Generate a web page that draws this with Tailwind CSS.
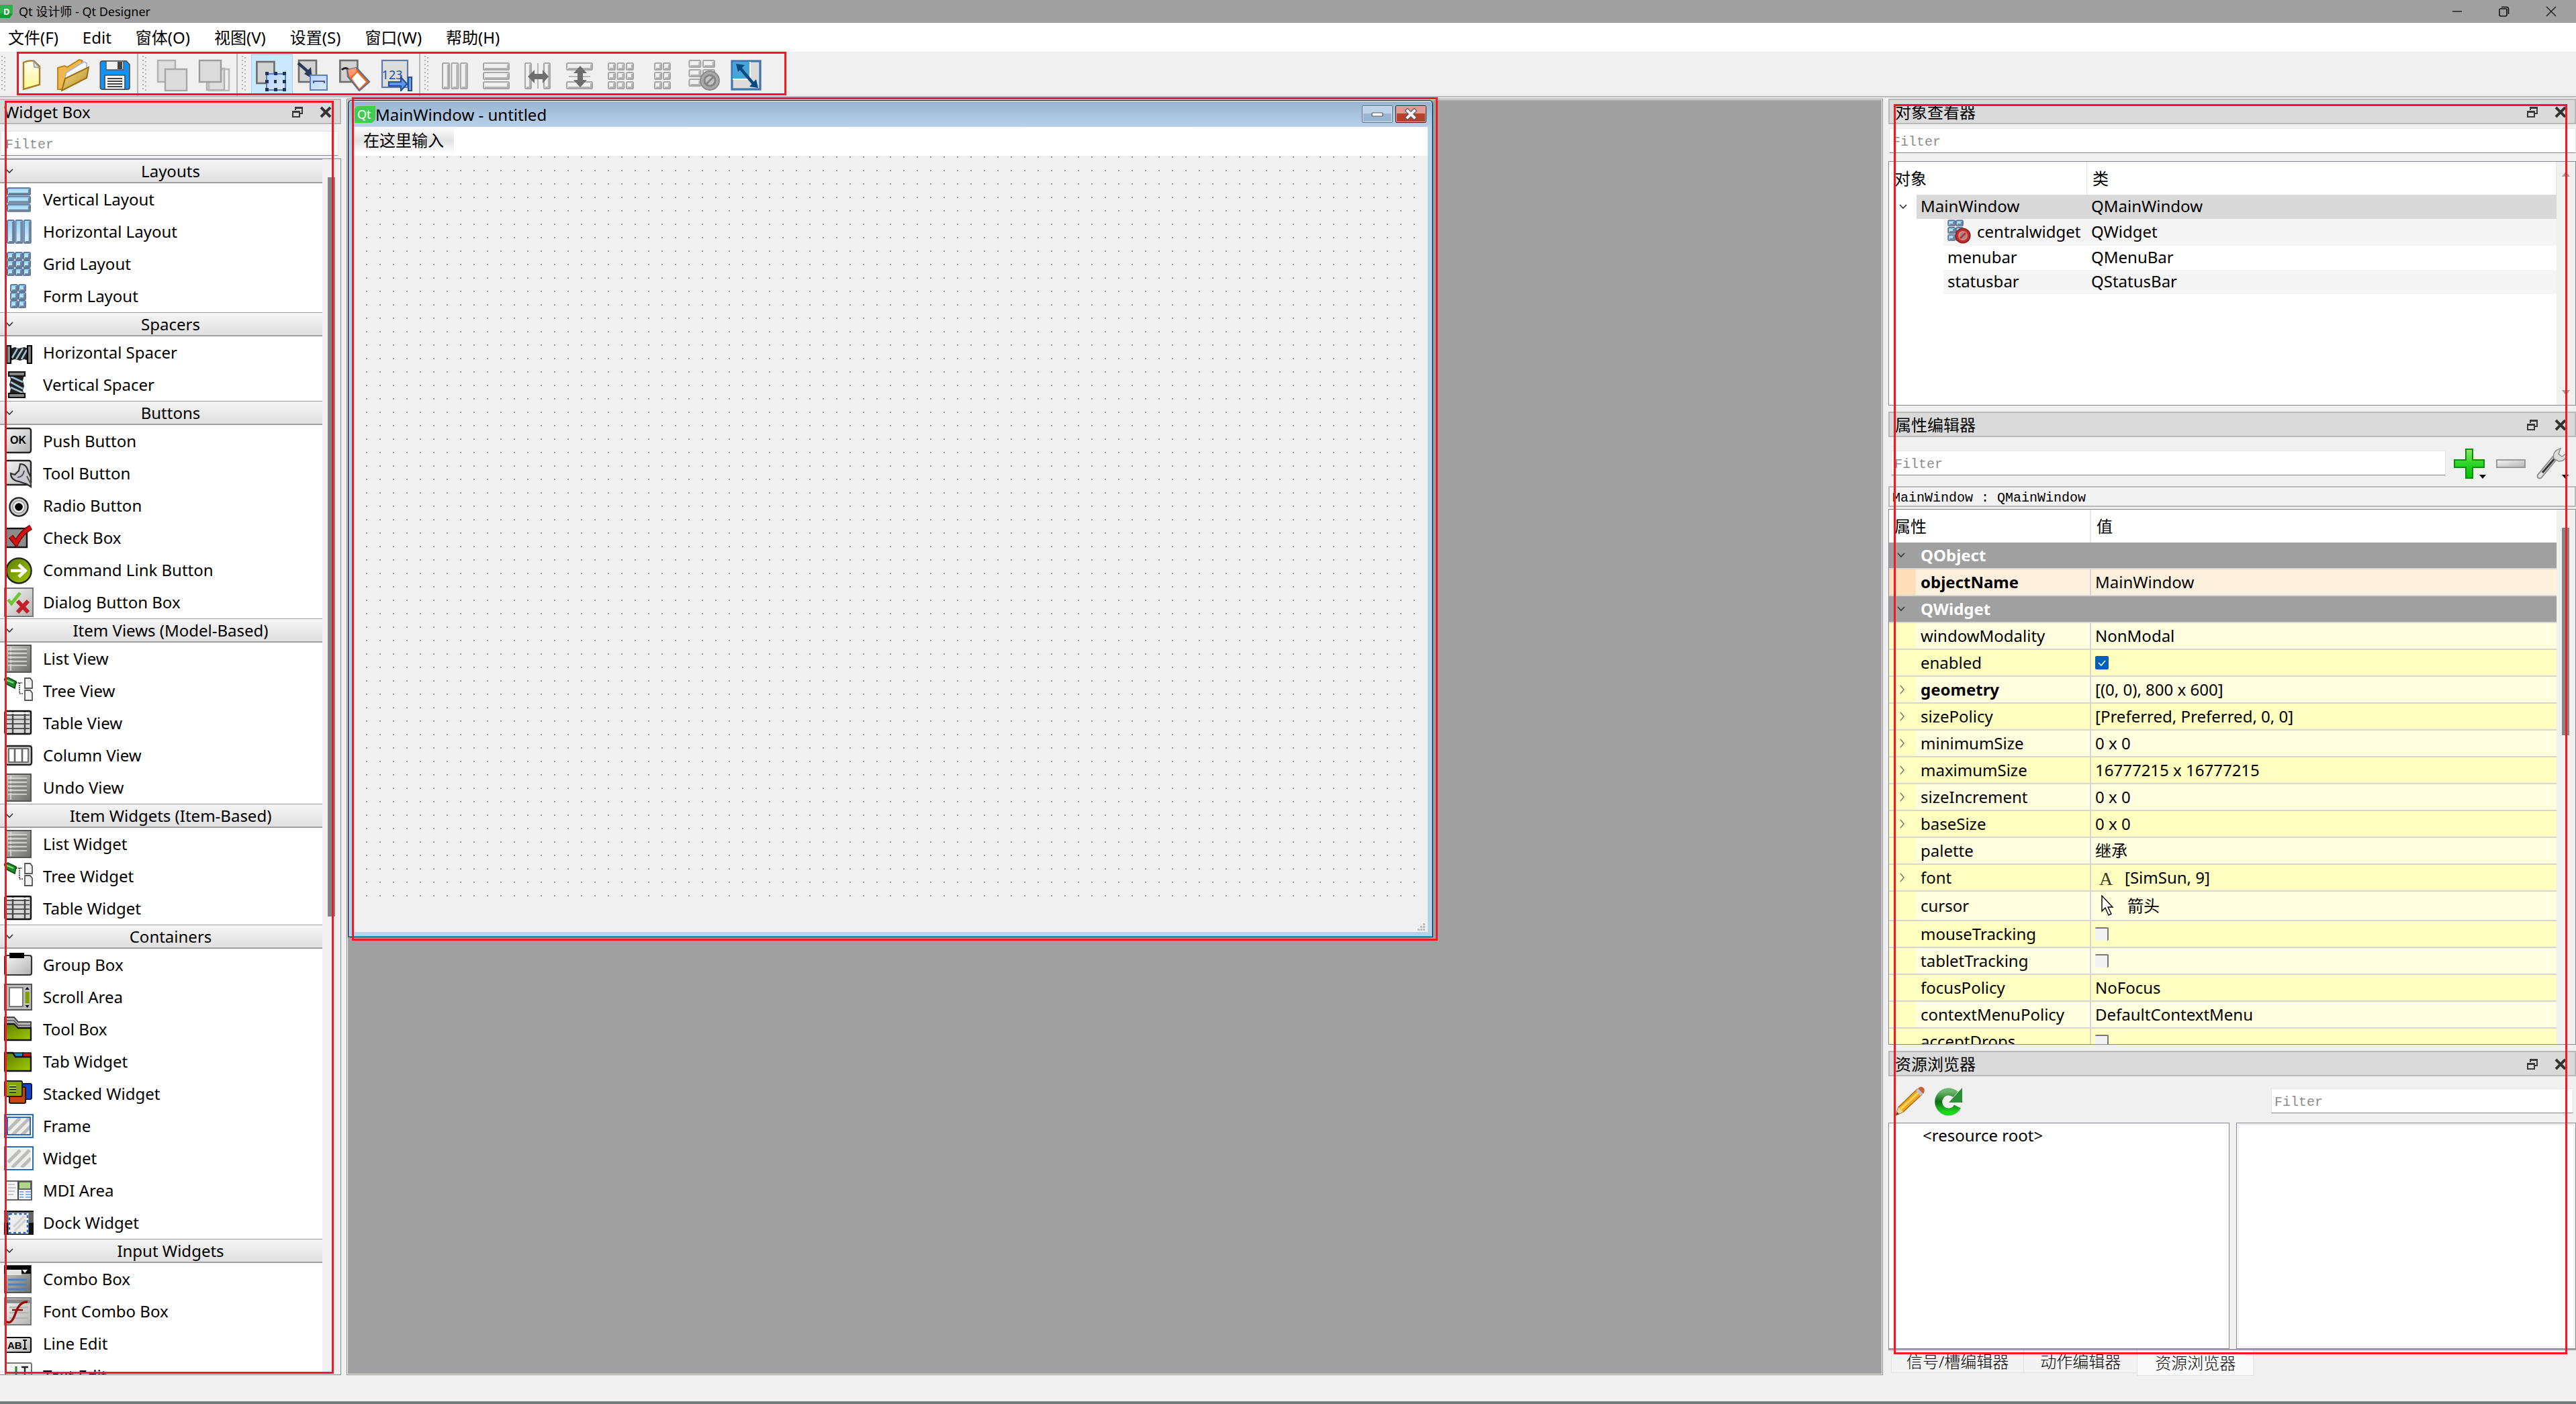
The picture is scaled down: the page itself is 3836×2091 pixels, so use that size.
<!DOCTYPE html>
<html lang="zh-CN">
<head>
    <meta charset="UTF-8">
    <meta name="viewport" content="width=device-width, initial-scale=1.0">
    <title>Qt 设计师 - Qt Designer</title>
    <script src="https://cdn.jsdelivr.net/npm/@tailwindcss/browser@4"></script>
</head>
<body class="h-screen flex flex-col overflow-hidden bg-[#f0f0f0] text-black text-2xl leading-8 font-['Noto_Sans','Noto_Sans_CJK_SC',sans-serif]">
    <!-- Shared gradients and symbols -->
    <svg class="absolute w-0 h-0" aria-hidden="true">
        <defs>
            <linearGradient id="gBlue" x1="0" y1="0" x2="0" y2="1"><stop offset="0" stop-color="#8ed3fa"/><stop offset="1" stop-color="#d9f1ff"/></linearGradient>
            <linearGradient id="gGray" x1="0" y1="0" x2="1" y2="1"><stop offset="0" stop-color="#f6f6f6"/><stop offset="1" stop-color="#b4b4b4"/></linearGradient>
            <linearGradient id="gList" x1="0" y1="0" x2="1" y2="1"><stop offset="0" stop-color="#c8c8c4"/><stop offset="1" stop-color="#6e6e6a"/></linearGradient>
            <linearGradient id="gLime" x1="0" y1="0" x2="1" y2="1"><stop offset="0" stop-color="#5f7a00"/><stop offset="1" stop-color="#a2cc00"/></linearGradient>
            <linearGradient id="gPaper" x1="0" y1="0" x2="0" y2="1"><stop offset="0" stop-color="#fffdf0"/><stop offset="1" stop-color="#fdf78c"/></linearGradient>
            <linearGradient id="gGold" x1="0" y1="0" x2="1" y2="1"><stop offset="0" stop-color="#f4dd8e"/><stop offset="1" stop-color="#b98a1c"/></linearGradient>
            <linearGradient id="gSky" x1="0" y1="0" x2="1" y2="1"><stop offset="0" stop-color="#b5d2ff"/><stop offset="1" stop-color="#dcebff"/></linearGradient>
            <linearGradient id="gGreen" x1="0" y1="0" x2="0" y2="1"><stop offset="0" stop-color="#8ee86c"/><stop offset="0.5" stop-color="#2fd32a"/><stop offset="1" stop-color="#00c400"/></linearGradient>
            <linearGradient id="gReload" x1="0" y1="0" x2="0" y2="1"><stop offset="0" stop-color="#6cb56c"/><stop offset="0.5" stop-color="#0a6b12"/><stop offset="1" stop-color="#1fd61f"/></linearGradient>
            <symbol id="float" viewBox="0 0 18 18"><path d="M6 6V2h10v9h-4" fill="none" stroke="#3a3a3a" stroke-width="2"/><path d="M5 1h12v3H5zM1 7h12v3H1z" fill="#3a3a3a"/><path d="M2 8h10v8H2z" fill="none" stroke="#3a3a3a" stroke-width="2"/></symbol>
            <symbol id="cross" viewBox="0 0 18 18"><path d="M2 2L16 16M16 2L2 16" stroke="#333" stroke-width="4"/></symbol>
            <symbol id="down" viewBox="0 0 12 8"><path d="M1 1l5 5 5-5" fill="none" stroke="#333" stroke-width="1.6"/></symbol>
            <symbol id="right" viewBox="0 0 8 14"><path d="M1 1l5 6-5 6" fill="none" stroke="#777" stroke-width="1.5"/></symbol>
        </defs>
    </svg>

    <!-- Title bar -->
    <header class="h-[34px] shrink-0 bg-[#a0a0a0] flex items-center justify-between">
        <div class="flex items-center gap-2">
            <svg class="w-5 h-6" viewBox="0 0 20 24"><path d="M0 2h19v14l-5 6H0z" fill="#2bb24a"/><path d="M0 16l10-3 9 3-5 6H0z" fill="#159a3a"/><text x="5" y="17" font-size="13" font-weight="700" fill="#fff" font-family="Noto Sans">D</text></svg>
            <span class="text-lg">Qt 设计师 - Qt Designer</span>
        </div>
        <div class="flex items-center pr-0.5">
            <button class="w-[70px] h-8 grid place-items-center" aria-label="最小化"><svg class="w-4 h-4" viewBox="0 0 16 16"><path d="M1 8h14" stroke="#222" stroke-width="1.5"/></svg></button>
            <button class="w-[70px] h-8 grid place-items-center" aria-label="还原"><svg class="w-4 h-4" viewBox="0 0 16 16"><rect x="1" y="4" width="11" height="11" rx="2" fill="none" stroke="#111" stroke-width="1.6"/><path d="M4 1.5h7.5q3 0 3 3V12" fill="none" stroke="#111" stroke-width="1.6"/></svg></button>
            <button class="w-[70px] h-8 grid place-items-center" aria-label="关闭"><svg class="w-4 h-4" viewBox="0 0 16 16"><path d="M1 1l14 14M15 1L1 15" stroke="#222" stroke-width="1.5"/></svg></button>
        </div>
    </header>

    <!-- Menu bar -->
    <nav class="h-[43px] shrink-0 bg-white flex items-center gap-9 pl-3">
        <button>文件(F)</button>
        <button>Edit</button>
        <button>窗体(O)</button>
        <button>视图(V)</button>
        <button>设置(S)</button>
        <button>窗口(W)</button>
        <button>帮助(H)</button>
    </nav>

    <!-- Toolbar -->
    <div id="toolbar" class="relative h-[68px] shrink-0 flex border-b-2 border-[#b8b8b8]"></div>

    <main class="flex-1 min-h-0 flex gap-2 pt-0.5">
        <!-- Widget Box -->
        <aside class="relative w-[508px] shrink-0 flex flex-col">
            <div class="h-[38px] shrink-0 flex items-center gap-6 pt-0.5 pl-1.5 pr-3 bg-[#dadada] border-2 border-l-0 border-[#b8b8b8]">
                <h2 class="flex-1">Widget Box</h2>
                <button aria-label="浮动"><svg class="w-[18px] h-[18px]"><use href="#float"/></svg></button>
                <button aria-label="关闭"><svg class="w-[18px] h-[18px]"><use href="#cross"/></svg></button>
            </div>
            <input type="text" aria-label="Filter" placeholder="Filter" class="mt-2.5 mb-1 mx-1 ml-px h-[37px] shrink-0 px-1.5 pt-1 bg-white border border-[#e6e6e6] border-b-[#828790] text-xl font-['Liberation_Mono',monospace] placeholder:text-[#8c8c8c]">
            <div class="flex-1 min-h-0 flex border border-l-0 border-[#828790] overflow-hidden bg-[#f0f0f0]">
                <div id="widgetList" class="w-[480px] bg-white"></div>
                <div class="flex-1 pt-[27px] pl-2"><div class="w-[11px] h-[1101px] bg-[#868686]"></div></div>
            </div>
            <div class="absolute left-[7px] right-[11px] top-[3px] bottom-0.5 border-3 border-[#ed1c24] pointer-events-none"></div>
        </aside>

        <!-- Form editing area -->
        <section class="flex-1 min-w-0 bg-[#a0a0a0] border border-[#828790] outline-1 -outline-offset-2 outline-white p-px">
            <div class="relative w-[1616px] rounded-t-md border border-black bg-[#b9d1ea]">
                <div class="border border-[#2fcdf0] border-t-white rounded-t-md">
                    <div class="h-[38px] px-1.5 flex items-center bg-linear-to-b from-[#99b4d1] to-[#b9d1ea] rounded-t-md">
                        <svg class="w-[31px] h-[25px] ml-0.5" viewBox="0 0 31 25"><path d="M4 0h27v20l-5 5H0V4z" fill="#41cd52"/><text x="4" y="19" font-size="18" fill="#fff" font-family="Noto Sans">Qt</text></svg>
                        <h1 class="flex-1 pt-0.5">MainWindow - untitled</h1>
                        <div class="flex gap-1 pr-0.5">
                            <button aria-label="最小化" class="w-[46px] h-[26px] rounded-xs border border-[#5d7290] bg-linear-to-b from-[#bfd3e8] from-45% to-[#9ab4d2] to-45% grid place-items-center outline-1 -outline-offset-2 outline-[#dbe8f5]"><svg class="w-[18px] h-[18px]" viewBox="0 0 18 18"><rect x="1" y="7" width="16" height="5" rx="1" fill="#fff" stroke="#53586a" stroke-width="1.2"/></svg></button>
                            <button aria-label="关闭" class="w-[46px] h-[26px] rounded-xs border border-[#430a14] bg-linear-to-b from-[#e09a8e] from-45% to-[#b8402a] to-45% grid place-items-center outline-1 -outline-offset-2 outline-[#e8b9b0]"><svg class="w-[18px] h-[18px]" viewBox="0 0 18 18"><path d="M4 4l10 10M14 4L4 14" stroke="#53586a" stroke-width="6.4" stroke-linecap="square"/><path d="M4 4l10 10M14 4L4 14" stroke="#f4f4f4" stroke-width="4" stroke-linecap="square"/></svg></button>
                        </div>
                    </div>
                    <div class="mx-1.5 mb-1.5 bg-[#f0f0f0]">
                        <div class="h-[43px] bg-white flex items-start"><button class="h-10 px-[15px] bg-linear-to-b from-white via-[#e2e2e2] to-white">在这里输入</button></div>
                        <svg class="block w-full h-[1156px]">
                            <defs><pattern id="dots" x="18" y="1" width="20" height="20" patternUnits="userSpaceOnUse"><rect x="1" y="0" width="2" height="2" fill="#a0a0a0"/></pattern></defs>
                            <rect x="18" y="0" width="1564" height="1104" fill="url(#dots)"/>
                            <path d="M1593 1143h3v3h-3zM1589 1147h3v3h-3zM1593 1147h3v3h-3zM1585 1151h3v3h-3zM1589 1151h3v3h-3zM1593 1151h3v3h-3z" fill="#bfbfbf"/>
                        </svg>
                    </div>
                </div>
                <div class="absolute left-[5px] -right-2 -top-[5px] -bottom-1.5 border-3 border-[#ed1c24] pointer-events-none"></div>
            </div>
        </section>

        <!-- Docks on the right -->
        <aside class="relative w-[1024px] shrink-0 flex flex-col">
            <div class="h-[38px] shrink-0 flex items-center gap-6 pt-0.5 pl-2 pr-3 bg-[#dadada] border-2 border-[#b8b8b8]">
                <h2 class="flex-1">对象查看器</h2>
                <button aria-label="浮动"><svg class="w-[18px] h-[18px]"><use href="#float"/></svg></button>
                <button aria-label="关闭"><svg class="w-[18px] h-[18px]"><use href="#cross"/></svg></button>
            </div>
            <input type="text" aria-label="Filter" placeholder="Filter" class="mt-1.5 mb-3 ml-px h-[37px] shrink-0 px-1 pt-1 bg-white border border-[#e6e6e6] border-b-[#828790] text-xl font-['Liberation_Mono',monospace] placeholder:text-[#8c8c8c]">
            <div class="h-[364px] shrink-0 flex border border-[#828790] bg-white">
                <div class="flex-1">
                    <table class="w-full table-fixed border-separate border-spacing-0 text-left">
                        <thead>
                            <tr class="h-[49px]">
                                <th class="w-[295px] pl-2 font-normal border-r border-[#e5e5e5]">对象</th>
                                <th class="pl-2 font-normal border-r border-[#e5e5e5]">类</th>
                            </tr>
                        </thead>
                        <tbody id="objectTree"></tbody>
                    </table>
                </div>
                <div class="w-7 bg-[#f0f0f0] flex flex-col justify-between items-center py-3.5">
                    <svg class="w-3 h-2" viewBox="0 0 12 8"><path d="M6 0l6 8H0z" fill="#a0a0a0"/></svg>
                    <svg class="w-3 h-2" viewBox="0 0 12 8"><path d="M6 8l6-8H0z" fill="#a0a0a0"/></svg>
                </div>
            </div>

            <div class="mt-[9px] h-[38px] shrink-0 flex items-center gap-6 pt-0.5 pl-2 pr-3 bg-[#dadada] border-2 border-[#b8b8b8]">
                <h2 class="flex-1">属性编辑器</h2>
                <button aria-label="浮动"><svg class="w-[18px] h-[18px]"><use href="#float"/></svg></button>
                <button aria-label="关闭"><svg class="w-[18px] h-[18px]"><use href="#cross"/></svg></button>
            </div>
            <div class="h-[73px] shrink-0 flex items-center gap-3 pt-1 pl-1 pr-2.5">
                <input type="text" aria-label="Filter" placeholder="Filter" class="flex-1 h-[37px] px-1 pt-1 bg-white border border-[#e6e6e6] border-b-[#828790] text-xl font-['Liberation_Mono',monospace] placeholder:text-[#8c8c8c]">
                <button aria-label="添加动态属性"><svg class="w-[50px] h-12" viewBox="0 0 50 48"><path d="M18 3h10v16h17v11H28v16H18V30H1V19h17z" fill="url(#gGreen)" stroke="#0b8f0b" stroke-width="2"/><path d="M38 41h10l-5 6z" fill="#000"/></svg></button>
                <button aria-label="删除动态属性"><svg class="w-12 h-12" viewBox="0 0 48 48"><rect x="2" y="19" width="42" height="11" fill="url(#gGray)" stroke="#9a9a9a" stroke-width="2"/></svg></button>
                <button aria-label="配置属性编辑器"><svg class="w-[50px] h-12" viewBox="0 0 50 48"><path d="M6 43L30 14" stroke="#8f8f8f" stroke-width="9" stroke-linecap="round"/><path d="M6 43L30 14" stroke="#e2e2e2" stroke-width="5" stroke-linecap="round"/><path d="M10 38L28 17" stroke="#333" stroke-width="3"/><path d="M27 17q-3-11 10-15l-3 8 5 4 7-5q0 12-12 12z" fill="#dcdcdc" stroke="#8f8f8f" stroke-width="1.5"/><path d="M39 41h10l-5 6z" fill="#000"/></svg></button>
            </div>
            <div class="h-[31px] shrink-0 flex items-center pt-1 pl-1 border-2 border-[#b8b8b8] bg-[#f2f2f2] text-xl font-['Liberation_Mono',monospace]">MainWindow : QMainWindow</div>
            <div class="mt-[3px] flex-1 min-h-0 flex border border-[#828790] bg-white">
                <div class="flex-1 h-full overflow-hidden">
                    <table class="w-full table-fixed border-separate border-spacing-0 text-left">
                        <colgroup><col class="w-10"><col class="w-[261px]"><col></colgroup>
                        <thead>
                            <tr class="h-[49px]">
                                <th colspan="2" class="pl-2 font-normal border-r-2 border-[#e5e5e5]">属性</th>
                                <th class="pl-2 font-normal">值</th>
                            </tr>
                        </thead>
                        <tbody id="properties"></tbody>
                    </table>
                </div>
                <div class="w-7 bg-[#f0f0f0] pt-[27px] pl-2"><div class="w-[11px] h-[309px] bg-[#868686]"></div></div>
            </div>

            <div class="mt-[9px] h-[38px] shrink-0 flex items-center gap-6 pt-0.5 pl-2 pr-3 bg-[#dadada] border-2 border-[#b8b8b8]">
                <h2 class="flex-1">资源浏览器</h2>
                <button aria-label="浮动"><svg class="w-[18px] h-[18px]"><use href="#float"/></svg></button>
                <button aria-label="关闭"><svg class="w-[18px] h-[18px]"><use href="#cross"/></svg></button>
            </div>
            <div class="h-[69px] shrink-0 flex items-center gap-2.5 pt-1 pl-2 pr-1">
                <button aria-label="编辑资源"><svg class="w-12 h-12" viewBox="0 0 48 48"><path d="M3 45l4-12L35 6l7 8-28 26z" fill="#f0a81c" stroke="#a8701a" stroke-width="1.5"/><path d="M10 36L38 10" stroke="#ffd45e" stroke-width="3"/><path d="M3 45l4-12 7 7z" fill="#edd49a"/><path d="M3 45l2-5 3 3z" fill="#444"/><path d="M33 8l3-3 8 7-4 4z" fill="#b8c4d4"/><path d="M36 5q5-5 9 0 2 4-1 8z" fill="#c8602c"/></svg></button>
                <button aria-label="重新加载"><svg class="w-12 h-12" viewBox="0 0 48 48"><path d="M34 14A15 15 0 1 0 37 32" fill="none" stroke="url(#gReload)" stroke-width="11"/><path d="M44 4v22H24z" fill="#2c8f35"/></svg></button>
                <div class="flex-1"></div>
                <input type="text" aria-label="Filter" placeholder="Filter" class="w-[450px] h-[37px] px-1 pt-1 bg-white border border-[#e6e6e6] border-b-[#828790] text-xl font-['Liberation_Mono',monospace] placeholder:text-[#8c8c8c]">
            </div>
            <div class="h-[337px] shrink-0 flex gap-2.5">
                <div class="w-[508px] bg-white border border-[#828790] pl-[50px] pt-0.5">&lt;resource root&gt;</div>
                <div class="flex-1 bg-white border border-[#828790] outline-2 -outline-offset-4 outline-[#f0f0f0]"></div>
            </div>
            <div class="h-[39px] shrink-0 flex items-start pl-1 border-t-2 border-[#a0a0a0] font-light">
                <button class="h-[34px] px-[22px] bg-[#f3f3f3] border border-t-0 border-[#e2e2e2]">信号/槽编辑器</button>
                <button class="h-[34px] px-6 bg-[#f3f3f3] border-b border-[#e2e2e2]">动作编辑器</button>
                <button class="h-[38px] px-[26px] bg-[#fafafa] border border-t-0 border-[#e2e2e2]">资源浏览器</button>
            </div>
            <div class="absolute left-2 right-[13px] top-2 bottom-[31px] border-3 border-[#ed1c24] pointer-events-none"></div>
        </aside>
    </main>

    <!-- Status bar -->
    <footer class="h-[43px] shrink-0 border-b-4 border-[#737b7b]"></footer>

    <script>
        // Beveled cell used by all layout icons
        const cell = (x, y, w, h, gray) => `<rect x="${x}" y="${y}" width="${w}" height="${h}" rx="0.8" fill="${gray ? '#f0f0f0' : 'url(#gBlue)'}" stroke="${gray ? '#a6a6a6' : '#62799c'}" stroke-width="1"/><path d="M${x + 1} ${y + h - 1}h${w - 2}v${2 - h}" fill="none" stroke="${gray ? '#b4b4b4' : '#71879b'}" stroke-width="1.1"/>`;
        const cells = (xs, ys, w, h, gray) => ys.map(y => xs.map(x => cell(x, y, w, h, gray)).join('')).join('');
        const block = (x, y, s = 13) => `<rect x="${x}" y="${y}" width="${s}" height="${s + 3}" fill="#d2d2d2" stroke="#6c6c6c" stroke-width="1.3"/>`;
        const pale = (x, y) => `<rect x="${x}" y="${y}" width="13" height="16" fill="#dedede" stroke="#b0b0b0" stroke-width="1.2"/>`;
        const hatch = '<path d="M3 14L12 5M6 18L19 5M13 18l7-7" stroke="#bcbcbc" stroke-width="2.6"/>';
        const list = '<rect x="1" y="1" width="19" height="20" fill="url(#gList)" stroke="#555" stroke-width="1"/><path d="M5 2v18" stroke="#ddd" stroke-width="0.8"/><path d="M3 4h14M3 7h14M3 10h14M3 13h14M3 16h14" stroke="#ddd" stroke-width="0.8"/><path d="M3 5.5h14M3 8.5h14M3 11.5h14M3 14.5h14" stroke="#777" stroke-width="0.7"/>';
        const tree = '<path d="M0 2l3-1 6 3-1 5-6-3z" fill="#1f8a2c" stroke="#0a4a12" stroke-width="0.8"/><path d="M2 3l5 2" stroke="#7fe07f" stroke-width="1"/><path d="M9 5h5M11.5 5v8M11.5 13h3" fill="none" stroke="#000" stroke-width="0.8" stroke-dasharray="0.8 0.8"/><path d="M15.500 1.500h4l1.500 2v5.500h-5.500zM15.500 10.500h4l1.500 2v5.500h-5.500z" fill="#f2f2f2" stroke="#555" stroke-width="0.9"/>';
        const table = '<rect x="0.700" y="2" width="19.300" height="17" rx="1" fill="#d6d6d6" stroke="#111" stroke-width="1.2"/><path d="M1 5h18M1 8.200h18M1 11.500h18M1 15h18" stroke="#555" stroke-width="0.9"/><path d="M6.500 2.500v16M15.500 2.500v16" stroke="#444" stroke-width="1.2"/><path d="M2 3.500h16" stroke="#fff" stroke-width="1"/>';

        const icons = {
            vbox: cells([2.5], [2.5, 8.7, 14.9], 17, 5),
            hbox: cells([2.5, 8.7, 14.9], [2.5], 5, 17),
            grid: cells([2.5, 8.5, 14.5], [2.5, 8.5, 14.5], 5, 5),
            form: cells([5, 11], [2.5, 8.5, 14.5], 5, 5),
            hspacer: '<path d="M5 8l3-1 3 1 4-1 3 1v9l-3-1-3 1-4-1-3 1z" fill="#222"/><path d="M6 15l4-7M9 16l5-8M13 16l4-7" stroke="#9fc4d8" stroke-width="1.3"/><path d="M2 6h3v13H2zM17.500 6h3v13h-3z" fill="#888" stroke="#000" stroke-width="1.1"/>',
            vspacer: '<path d="M4 4h11l-1 4 1 4-1 3 1 3H4l1-4-1-3 1-4z" fill="#222"/><path d="M5 5l9 4M5 9l9 5M5 13l9 4" stroke="#9fc4d8" stroke-width="1.3"/><path d="M3.500 1.500h12v3h-12zM3.500 17.500h12v3h-12z" fill="#888" stroke="#111" stroke-width="1.1"/>',
            push: '<rect x="1" y="1.500" width="19" height="18" rx="1.500" fill="url(#gGray)" stroke="#222" stroke-width="1.2"/><text x="4.500" y="13" font-size="8" font-weight="700" font-family="Liberation Sans">OK</text>',
            tool: '<rect x="1" y="1.500" width="19" height="18" rx="1.500" fill="url(#gGray)" stroke="#222" stroke-width="1.2"/><path d="M12 4l-1 5-3 3-3-1q0 5 6 6l6 2 3 2v-7l-2-4q-1-6-6-6z" fill="#c9c9d0" stroke="#2f2f2f" stroke-width="1.1"/><path d="M15 9q-1 5-5 5M17 13l3 6" fill="none" stroke="#555" stroke-width="1"/>',
            radio: '<circle cx="11" cy="12" r="6.800" fill="#cfcfcf" stroke="#222" stroke-width="1.2"/><circle cx="11" cy="12" r="4.600" fill="#eee" stroke="#999" stroke-width="0.8"/><circle cx="11" cy="12" r="2.900" fill="#000"/>',
            check: '<rect x="1.500" y="4" width="15.500" height="14" fill="#8c8c8c" stroke="#111" stroke-width="1.2"/><path d="M5 10l4 5Q13 7 20 3" fill="none" stroke="#6b0606" stroke-width="4"/><path d="M5 10l4 5Q13 7 20 3" fill="none" stroke="#d80d0d" stroke-width="2.600"/>',
            command: '<circle cx="11" cy="11.500" r="9.300" fill="url(#gLime)" stroke="#222" stroke-width="1.2"/><path d="M5 11.500h10M11 7l4.800 4.500L11 16" fill="none" stroke="#fff" stroke-width="2.300"/>',
            dialog: '<rect x="0.500" y="0.500" width="21" height="21" fill="url(#gGray)" stroke="#777" stroke-width="1"/><path d="M3 9l2.500 3L12 4" fill="none" stroke="#6fc52f" stroke-width="2.400"/><path d="M10 10l8 8.500M18 10l-8 8.500" stroke="#c2202a" stroke-width="3"/>',
            list, tree, table,
            column: '<rect x="1" y="4" width="19.500" height="14" rx="1.500" fill="#c9c9c9" stroke="#222" stroke-width="1.2"/><rect x="3.500" y="6" width="14.500" height="10" fill="#fff" stroke="#555" stroke-width="0.8"/><path d="M8 6v10M13.500 6v10" stroke="#666" stroke-width="1.300"/>',
            group: '<rect x="0.500" y="4" width="20" height="14.500" rx="1.500" fill="url(#gGray)" stroke="#333" stroke-width="1.100"/><path d="M4 2h11v4H4z" fill="#000"/>',
            scroll: '<rect x="0.500" y="1.500" width="20" height="19" fill="#bdbdbd" stroke="#555" stroke-width="1"/><rect x="4" y="4" width="10" height="14" fill="#fff" stroke="#777" stroke-width="1"/><rect x="15.800" y="7" width="3" height="8.500" fill="#7f9e00"/><path d="M17.300 3.500l1.600 2h-3.200zM17.300 19l1.600-2h-3.200z"/>',
            toolbox: '<path d="M0.500 2h7l3 3.500h9.500v5H0.500z" fill="#b5b5b5" stroke="#444" stroke-width="1"/><path d="M1 4.500h6.500l3 3.500H20" fill="none" stroke="#555" stroke-width="0.800"/><path d="M0.500 7h7l3 3h9.500v9H0.500z" fill="url(#gLime)" stroke="#111" stroke-width="1.200"/>',
            tab: '<path d="M7 4.500h7v4H7z" fill="#2084d8" stroke="#111" stroke-width="0.800"/><path d="M14 4.500h6v4h-6z" fill="#e01010" stroke="#111" stroke-width="0.800"/><path d="M0.500 4.500h6l2 3h11.500v10.500H0.500z" fill="url(#gLime)" stroke="#111" stroke-width="1.200"/>',
            stacked: '<rect x="11" y="3.500" width="9.500" height="11.500" rx="1" fill="#1244c8" stroke="#051a5a"/><rect x="4" y="6" width="12" height="12" rx="1" fill="#c2480e" stroke="#3a1200"/><rect x="0.500" y="1.500" width="13" height="11.500" rx="1" fill="#86a800" stroke="#222"/><path d="M4 5.500h5M4 7.500h5M4 9.500h5" stroke="#123" stroke-width="1.500"/><path d="M4 5h5M4 7h5M4 9h5" stroke="#d8ff3a" stroke-width="0.700"/>',
            frame: '<rect x="0.500" y="2.500" width="21" height="17" fill="#fff" stroke="#2a6cc0"/><rect x="2.500" y="4.500" width="17" height="13" fill="#efefec"/>' + hatch + '<path d="M0 1h22v20H0zM2.500 4.500v13h17v-13z" fill="#fff" fill-rule="evenodd"/><rect x="0.500" y="2.500" width="21" height="17" fill="none" stroke="#2a6cc0"/><rect x="2.500" y="4.500" width="17" height="13" fill="none" stroke="#2a6cc0"/>',
            widget: '<rect x="0.500" y="2.500" width="21" height="17" fill="#efefec"/>' + hatch + '<path d="M0 1h22v20H0zM2 4v14h18V4z" fill="#fff" fill-rule="evenodd"/><rect x="0.500" y="2.500" width="21" height="17" fill="none" stroke="#2a6cc0"/>',
            mdi: '<rect x="1" y="4" width="19.500" height="14" fill="#f4f4f4" stroke="#555" stroke-width="0.900"/><path d="M3 6.500h5M3 9h6M3 11.500h5M3 14h4" stroke="#bbb" stroke-width="0.800"/><rect x="11" y="4.500" width="9" height="5.500" fill="#add68a" stroke="#555" stroke-width="0.900"/><path d="M11.500 12h3M11.500 14h3M11.500 16h3M16 12h4M16 14h4M16 16h4" stroke="#86aef0" stroke-width="1.100"/><path d="M10.500 4v14" stroke="#444" stroke-width="1"/>',
            dock: '<rect x="0" y="2" width="22" height="18" fill="#666"/><path d="M0 11h22v9H0z" fill="#111"/><path d="M0 2.500h22" stroke="#111"/><rect x="4" y="4.500" width="13.500" height="14" fill="#ededed" stroke="#fff" stroke-width="1.400"/><path d="M7 14l8-8M8 17l8-8" stroke="#d2d2d2" stroke-width="1.600"/><rect x="4" y="4.500" width="13.500" height="14" fill="none" stroke="#2a6cc0" stroke-width="1.300" stroke-dasharray="2 1.600"/>',
            combo: '<rect x="0.500" y="1" width="19.500" height="20" fill="url(#gList)" stroke="#555"/><path d="M0 1h20v6H0z" fill="#050505"/><path d="M1 4h12v4H1z" fill="#e4e4e4"/><path d="M13.500 4h4l-2 2.500z" fill="#fff"/><path d="M3 11.500h14M3 15h14M3 18.500h14" stroke="#4a80c4" stroke-width="1.600"/>',
            fontcombo: '<rect x="0.500" y="1" width="19.500" height="20" fill="url(#gGray)" stroke="#777"/><path d="M1 3.500h19" stroke="#8a8a8a" stroke-width="3"/><path d="M4 8h14M4 12h14M4 16h14" stroke="#b5b5ae" stroke-width="1.200"/><path d="M1.500 18.500q4 3 7-6t9-8.500" fill="none" stroke="#9a0a0a" stroke-width="1.700"/><path d="M6 10h8" stroke="#9a0a0a" stroke-width="1.300"/>',
            lineedit: '<rect x="1" y="6.500" width="19" height="11" rx="1" fill="url(#gGray)" stroke="#111" stroke-width="1.100"/><text x="2.500" y="15" font-size="7.500" font-weight="700" font-family="Liberation Sans">AB</text><path d="M14 8.500h3M14 15h3M15.500 8.500V15" stroke="#000" stroke-width="0.900"/>',
            textedit: '<rect x="1" y="1.500" width="19.500" height="18" rx="1" fill="#f4f4f4" stroke="#777"/><path d="M9 4v8" stroke="#1a8a2a" stroke-width="1.500"/><path d="M13 4.500h5M15.500 4.500V12" stroke="#222" stroke-width="1.200"/>'
        };

        const categories = [
            ['Layouts', [['vbox', 'Vertical Layout'], ['hbox', 'Horizontal Layout'], ['grid', 'Grid Layout'], ['form', 'Form Layout']]],
            ['Spacers', [['hspacer', 'Horizontal Spacer'], ['vspacer', 'Vertical Spacer']]],
            ['Buttons', [['push', 'Push Button'], ['tool', 'Tool Button'], ['radio', 'Radio Button'], ['check', 'Check Box'], ['command', 'Command Link Button'], ['dialog', 'Dialog Button Box']]],
            ['Item Views (Model-Based)', [['list', 'List View'], ['tree', 'Tree View'], ['table', 'Table View'], ['column', 'Column View'], ['list', 'Undo View']]],
            ['Item Widgets (Item-Based)', [['list', 'List Widget'], ['tree', 'Tree Widget'], ['table', 'Table Widget']]],
            ['Containers', [['group', 'Group Box'], ['scroll', 'Scroll Area'], ['toolbox', 'Tool Box'], ['tab', 'Tab Widget'], ['stacked', 'Stacked Widget'], ['frame', 'Frame'], ['widget', 'Widget'], ['mdi', 'MDI Area'], ['dock', 'Dock Widget']]],
            ['Input Widgets', [['combo', 'Combo Box'], ['fontcombo', 'Font Combo Box'], ['lineedit', 'Line Edit'], ['textedit', 'Text Edit']]]
        ];

        document.getElementById('widgetList').innerHTML = categories.map(([title, items]) => `
            <button class="w-full h-9 flex items-center gap-2 pl-2 border-b-2 border-t border-t-[#a0a0a0] border-b-[#a0a0a0] bg-linear-to-b from-[#f5f5f5] to-[#e0e0e0]">
                <svg class="w-3 h-2"><use href="#down"/></svg>
                <span class="flex-1 text-center">${title}</span>
            </button>
            <ul>${items.map(([icon, name]) => `
                <li class="h-12 flex items-center gap-3.5 pl-1.5">
                    <svg class="w-11 h-11" viewBox="0 0 22 22">${icons[icon]}</svg>
                    <span>${name}</span>
                </li>`).join('')}
            </ul>
        `).join('');

        // Toolbar groups: [label, drawing, state]
        const tools = [
            [
                ['新建', '<path d="M6 2.500Q10 0.500 14 1.500L18 5.500V19L6 22.500z" fill="url(#gPaper)" stroke="#a87c28" stroke-width="1.200"/><path d="M13.500 1.500l0.500 4.500 4 0.500z" fill="#e4e4e4" stroke="#999" stroke-width="0.800"/>'],
                ['打开', '<path d="M0.500 6.500l5-1.500 2 1 9-5.500 2 0.500v6L5 22.500l-4.500 0z" fill="#f0b848" stroke="#c08420" stroke-width="1"/><path d="M4 21L7 10 20 2l2 1v5z" fill="#eef2fa" stroke="#a9b4c8" stroke-width="0.800"/><path d="M5 20L8 11 21 4" fill="none" stroke="#fff" stroke-width="1.200"/><path d="M3.500 23.500L6 14.500 23.500 6 22 14z" fill="url(#gGold)" stroke="#9a7010" stroke-width="1"/>'],
                ['保存', '<path d="M3 1.500h17.500L23 4v17q0 1.500-1.500 1.500h-19Q1.200 22.500 1.200 21V3Q1.200 1.500 3 1.500z" fill="#0d94ff" stroke="#555" stroke-width="0.900"/><path d="M5.500 1.500h13v6.500h-13z" fill="#f2f2f2" stroke="#555" stroke-width="0.700"/><path d="M14 2h3.500v5.500H14z" fill="#444"/><path d="M4.500 12h15v10.500h-15z" fill="#f6f6f6" stroke="#444" stroke-width="0.800"/><path d="M6.500 14.500h11M6.500 16.500h11M6.500 18.500h11M6.500 20.500h11" stroke="#444" stroke-width="0.900"/>']
            ],
            [
                ['放到后面', pale(1, 1) + '<rect x="6.500" y="7.500" width="16" height="16" fill="#dcdcdc" stroke="#a6a6a6" stroke-width="1.200"/>'],
                ['放到前面', pale(6.500, 7) + '<path d="M16 7.500h7v16H8v-6" fill="none" stroke="#b8b8b8" stroke-width="1.200"/><rect x="1" y="1" width="16" height="16" fill="#dcdcdc" stroke="#9c9c9c" stroke-width="1.200"/>']
            ],
            [
                ['编辑窗口部件', block(0.700, 2) + '<rect x="8" y="11" width="14" height="12" fill="url(#gSky)" stroke="#5a7fc0"/><path d="M7 9.500h2.500V12H7zM13.500 9.500H16V12h-2.500zM20 9.500h2.500V12H20zM7 15.500h2.500V18H7zM20 15.500h2.500V18H20zM7 21.500h2.500V24H7zM13.500 21.500H16V24h-2.500zM20 21.500h2.500V24H20zM13.500 15.500h2V18h-2z" fill="#22335c"/>', true],
                ['编辑信号/槽', block(1, 1) + '<path d="M0.500 3l8 7" stroke="#2b3c58" stroke-width="2.200"/><path d="M11 14.500l-6-3.500 5-5z" fill="#2b3c58"/><rect x="9.500" y="12" width="12.500" height="11" fill="url(#gSky)" stroke="#5a7fc0"/><path d="M12 18v-1.500h8V18" fill="none" stroke="#4b5f86" stroke-width="1.100"/>'],
                ['编辑伙伴', block(0.700, 1) + '<path d="M2 8q3-3 6 1" fill="none" stroke="#222" stroke-width="1.500"/><path d="M6 8l7-1.500L22.500 17 15 23.500 6.500 13z" fill="#f06a1c" stroke="#5d6f88" stroke-width="1.100"/><path d="M13.500 10l6.500 7-5 5-5.500-7.500z" fill="#fff"/><path d="M6.500 8l6-1.500 0.500 3-5 4z" fill="#ff9a70"/>'],
                ['编辑 Tab 顺序', '<rect x="1" y="1" width="19" height="20" fill="#dcdcdc" stroke="#5f7ba8" stroke-width="1.100"/><text x="0.800" y="15" font-size="9" fill="#1d4f9e" font-family="Noto Sans">123</text><path d="M6 17h9v-3.500l4.500 5-4.500 5V20H6z" fill="#5d97f0" stroke="#28508f" stroke-width="1.100"/><path d="M20.500 13.500h2.500v10h-2.500z" fill="#6ea2f5" stroke="#28508f"/>']
            ],
            [
                ['水平布局', cells([3, 9.7, 16.400], [3], 5, 19, true)],
                ['垂直布局', cells([2.500], [3, 10, 17], 19, 5, true)],
                ['使用分裂器水平布局', cells([2.500, 16.500], [3], 4.500, 19, true) + '<path d="M12 3v19" stroke="#aaa" stroke-width="0.800"/><path d="M4.500 13l5-5v3h6V8l4.500 5-4.500 5v-3h-6v3z" fill="#6e6e6e"/>'],
                ['使用分裂器垂直布局', cells([2.500], [3, 17], 19, 5, true) + '<path d="M4 13h16" stroke="#aaa" stroke-width="0.800"/><path d="M12.500 5l5 5.500h-3v5h3l-5 5.500-5-5.500h3v-5h-3z" fill="#6e6e6e"/>'],
                ['栅格布局', cells([2.500, 9.200, 16], [3, 10, 17], 5, 5, true)],
                ['在窗体布局中布局', cells([6, 12.500], [3, 10, 17], 5, 5, true)],
                ['打破布局', cells([0.700, 11], [1, 8, 15], 8.500, 5, true) + '<circle cx="16" cy="16" r="7" fill="#a8a8a8" stroke="#8a8a8a"/><circle cx="16" cy="16" r="4" fill="#c4c4c4" stroke="#858585" stroke-width="1.500"/><path d="M13 19l6-6" stroke="#858585" stroke-width="1.500"/>'],
                ['调整大小', '<rect x="1.500" y="1.500" width="21" height="21" fill="#dcdcdc" stroke="#3f74ae" stroke-width="1.600"/><rect x="2" y="2" width="13" height="13" fill="#49a3d8"/><path d="M15 2v13H2" fill="none" stroke="#fff" stroke-width="1"/><path d="M7 6l11 13" stroke="#0a4a80" stroke-width="2.200"/><path d="M4.500 3.500l6.500 1-5 5zM21 21.500l-6.500-1 5-5.500z" fill="#0a4a80"/>']
            ]
        ];

        document.getElementById('toolbar').innerHTML = tools.map((group, i) => `
            <div class="flex items-center gap-2 pr-0.5 ${i < 3 ? 'border-r-2 border-[#b8b8b8]' : ''} ${i ? 'pl-1.5' : 'pl-0.5'}">
                <svg class="w-1.5 h-14" viewBox="0 0 6 56"><path d="M1 1v54M5 3v52" stroke="#b4b4b4" stroke-width="2" stroke-dasharray="2 4"/></svg>
                <div class="flex h-full pt-1 pb-px">${group.map(([label, art, on]) => `
                    <button aria-label="${label}" class="w-[62px] h-full grid place-items-center ${on ? 'bg-[#cce8ff] border border-[#99d1ff]' : ''}">
                        <svg class="w-12 h-12" viewBox="0 0 24 24">${art}</svg>
                    </button>`).join('')}
                </div>
            </div>
        `).join('') + '<div class="absolute left-[25px] top-0 w-[1146px] h-[65px] border-3 border-[#ed1c24] pointer-events-none"></div>';

        const central = `<svg class="w-9 h-9 mr-2" viewBox="0 0 18 18">${cells([0.600, 6.500], [0.600, 6, 11.400], 5, 4)}<circle cx="11.500" cy="12" r="5.400" fill="#c03030" stroke="#8a2020" stroke-width="0.800"/><circle cx="11.500" cy="12" r="3" fill="#9a8a8a" stroke="#e08080" stroke-width="1"/><path d="M9.500 14l4-4" stroke="#c03030" stroke-width="1.400"/></svg>`;
        const objects = [
            ['MainWindow', 'QMainWindow', 'h-9', 'bg-[#d9d9d9]', true, ''],
            ['centralwidget', 'QWidget', 'h-10', 'bg-[#f5f5f5]', false, central],
            ['menubar', 'QMenuBar', 'h-9', 'bg-white', false, ''],
            ['statusbar', 'QStatusBar', 'h-9', 'bg-[#f5f5f5]', false, '']
        ];
        document.getElementById('objectTree').innerHTML = objects.map(([name, cls, h, bg, root, icon]) => `
            <tr class="${h}">
                <td class="p-0"><div class="flex items-center ${h}">
                    <span class="${root ? 'w-[41px]' : 'w-[81px]'} shrink-0 grid place-items-center">${root ? '<svg class="w-3 h-2"><use href="#down"/></svg>' : ''}</span>
                    <span class="flex-1 h-full flex items-center pl-1.5 pb-0.5 ${bg}">${icon}${name}</span>
                </div></td>
                <td class="p-0 pl-1.5 pb-0.5 ${bg}">${cls}</td>
            </tr>
        `).join('');

        // Property rows: [name, value, expandable, bold]
        const rows = [
            ['QObject'],
            ['objectName', 'MainWindow', false, true],
            ['QWidget'],
            ['windowModality', 'NonModal'],
            ['enabled', true],
            ['geometry', '[(0, 0), 800 x 600]', true, true],
            ['sizePolicy', '[Preferred, Preferred, 0, 0]', true],
            ['minimumSize', '0 x 0', true],
            ['maximumSize', '16777215 x 16777215', true],
            ['sizeIncrement', '0 x 0', true],
            ['baseSize', '0 x 0', true],
            ['palette', '继承'],
            ['font', `<span class="flex items-center gap-4 pl-1"><span class="w-6 pt-1 text-center text-[28px] leading-8 font-['Liberation_Serif',serif] text-[#3c3c20]">A</span>[SimSun, 9]</span>`, true],
            ['cursor', '<span class="flex items-center gap-5 pl-2"><svg class="w-5 h-8" viewBox="0 0 20 32"><path d="M2 1v23l5-5 5 11 4-2-5-10h7z" fill="#fff" stroke="#000" stroke-width="1.4"/></svg>箭头</span>'],
            ['mouseTracking', false],
            ['tabletTracking', false],
            ['focusPolicy', 'NoFocus'],
            ['contextMenuPolicy', 'DefaultContextMenu'],
            ['acceptDrops', false]
        ];
        const box = (name, on) => `
            <span class="grid w-5 h-5">
                <input type="checkbox" id="p-${name}" ${on ? 'checked' : ''} class="col-start-1 row-start-1 w-5 h-5 appearance-none rounded-xs bg-[#f3f3f3] border-t-2 border-r-2 border-[#777] checked:bg-[#005fb8] checked:border-[#005fb8]">
                ${on ? '<svg class="col-start-1 row-start-1 w-5 h-5 pointer-events-none" viewBox="0 0 20 20"><path d="M5 10l4 4 6-7" fill="none" stroke="#fff" stroke-width="1.6"/></svg>' : ''}
            </span>`;
        document.getElementById('properties').innerHTML = rows.map(([name, value, open, bold], i) => {
            if (value === undefined) {
                return `<tr class="h-10 bg-[#a0a0a0] text-white">
                    <td class="p-0 pl-3 border-b-2 border-[#d6d6d6]"><svg class="w-3 h-2"><use href="#down"/></svg></td>
                    <td colspan="2" class="p-0 pl-[7px] font-bold border-b-2 border-[#d6d6d6]">${name}</td>
                </tr>`;
            }
            const dark = i % 2 === 0;
            const side = i === 1 ? 'bg-[#ffdfb9]' : 'bg-[#ffffbf]';
            const bg = i === 1 ? 'bg-[#fff0de]' : dark ? 'bg-[#ffffbf]' : 'bg-[#ffffdf]';
            const check = typeof value === 'boolean';
            return `<tr class="${name === 'cursor' ? 'h-11' : 'h-10'}">
                <td class="p-0 pl-4 border-b-2 border-[#d6d6d6] ${side}">${open ? '<svg class="w-2 h-3.5"><use href="#right"/></svg>' : ''}</td>
                <td class="p-0 pl-[7px] border-b-2 border-r-2 border-[#d6d6d6] ${bg} ${bold ? 'font-bold' : ''}">${check ? `<label for="p-${name}">${name}</label>` : name}</td>
                <td class="p-0 pl-1.5 border-b-2 border-[#d6d6d6] ${bg}">${check ? box(name, value) : value}</td>
            </tr>`;
        }).join('');
    </script>
</body>
</html>
